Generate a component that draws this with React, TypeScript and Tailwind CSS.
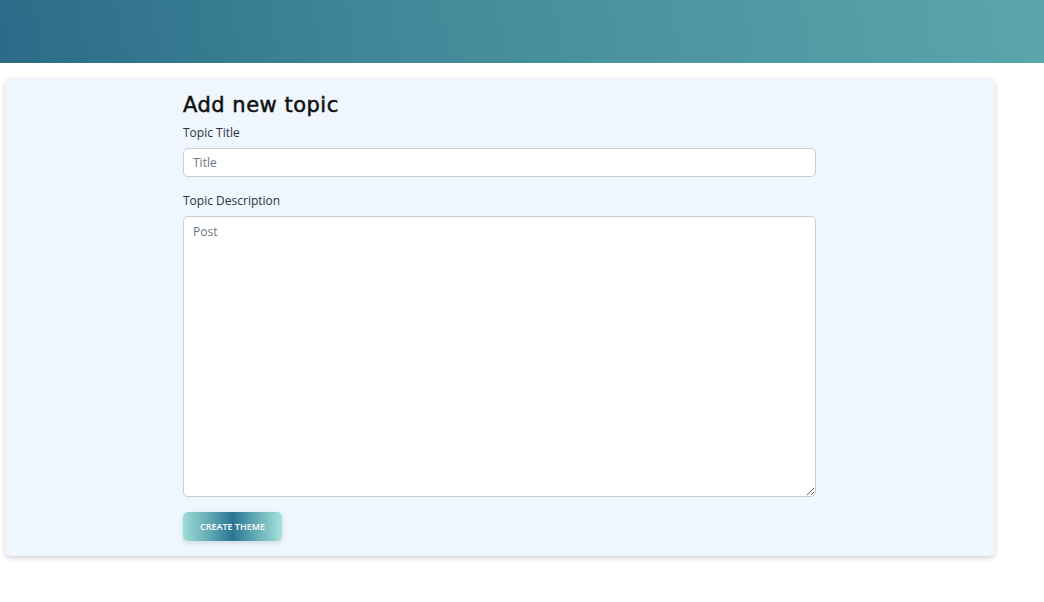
export default function App() {
  return (
    <div className="min-h-[602px] bg-white" style={{ fontFamily: '"Open Sans", "Noto Sans", sans-serif' }}>
      <header className="h-[63px] bg-[linear-gradient(80deg,#2b6b88_0%,#428a99_40%,#5ba6ad_100%)]" />
      <main className="pt-[15px] pl-[5px] w-[995px]">
        <div className="bg-[#eff6fe] rounded-md shadow-[0_2px_5px_rgba(0,0,0,0.18)] pt-[14px] pb-[15px]">
          <form className="w-[633px] ml-[178px] flex flex-col">
            <h2
              className="text-[21px] leading-[26px] font-normal text-[#111] tracking-[0.5px] [-webkit-text-stroke:0.5px_#111]"
              style={{ fontFamily: '"DejaVu Sans", sans-serif' }}
            >
              Add new topic
            </h2>
            <label htmlFor="title" className="mt-[7px] text-[12px] leading-[16px] text-[#2a3441]">
              Topic Title
            </label>
            <input
              id="title"
              placeholder="Title"
              className="mt-[7px] h-[29px] w-full rounded-[5px] border border-[#c8cfd8] bg-white px-[9px] text-[12px] text-[#333] placeholder:text-[#6b7785] outline-none"
            />
            <label htmlFor="desc" className="mt-[16px] text-[12px] leading-[16px] text-[#2a3441]">
              Topic Description
            </label>
            <textarea
              id="desc"
              placeholder="Post"
              className="mt-[7px] h-[281px] w-full rounded-[5px] border border-[#c8cfd8] bg-white px-[9px] py-[6px] text-[12px] text-[#333] placeholder:text-[#6b7785] outline-none"
            />
            <div className="mt-[15px]">
              <button
                type="submit"
                className="h-[29px] w-[99px] rounded-[5px] bg-[linear-gradient(90deg,#9ddcd6_0%,#5aa3b0_30%,#2a7594_50%,#5aa3b0_70%,#a6e3da_100%)] text-[9px] font-semibold uppercase text-white shadow-[0_2px_5px_rgba(0,0,0,0.12)]"
              >
                Create Theme
              </button>
            </div>
          </form>
        </div>
      </main>
    </div>
  );
}
